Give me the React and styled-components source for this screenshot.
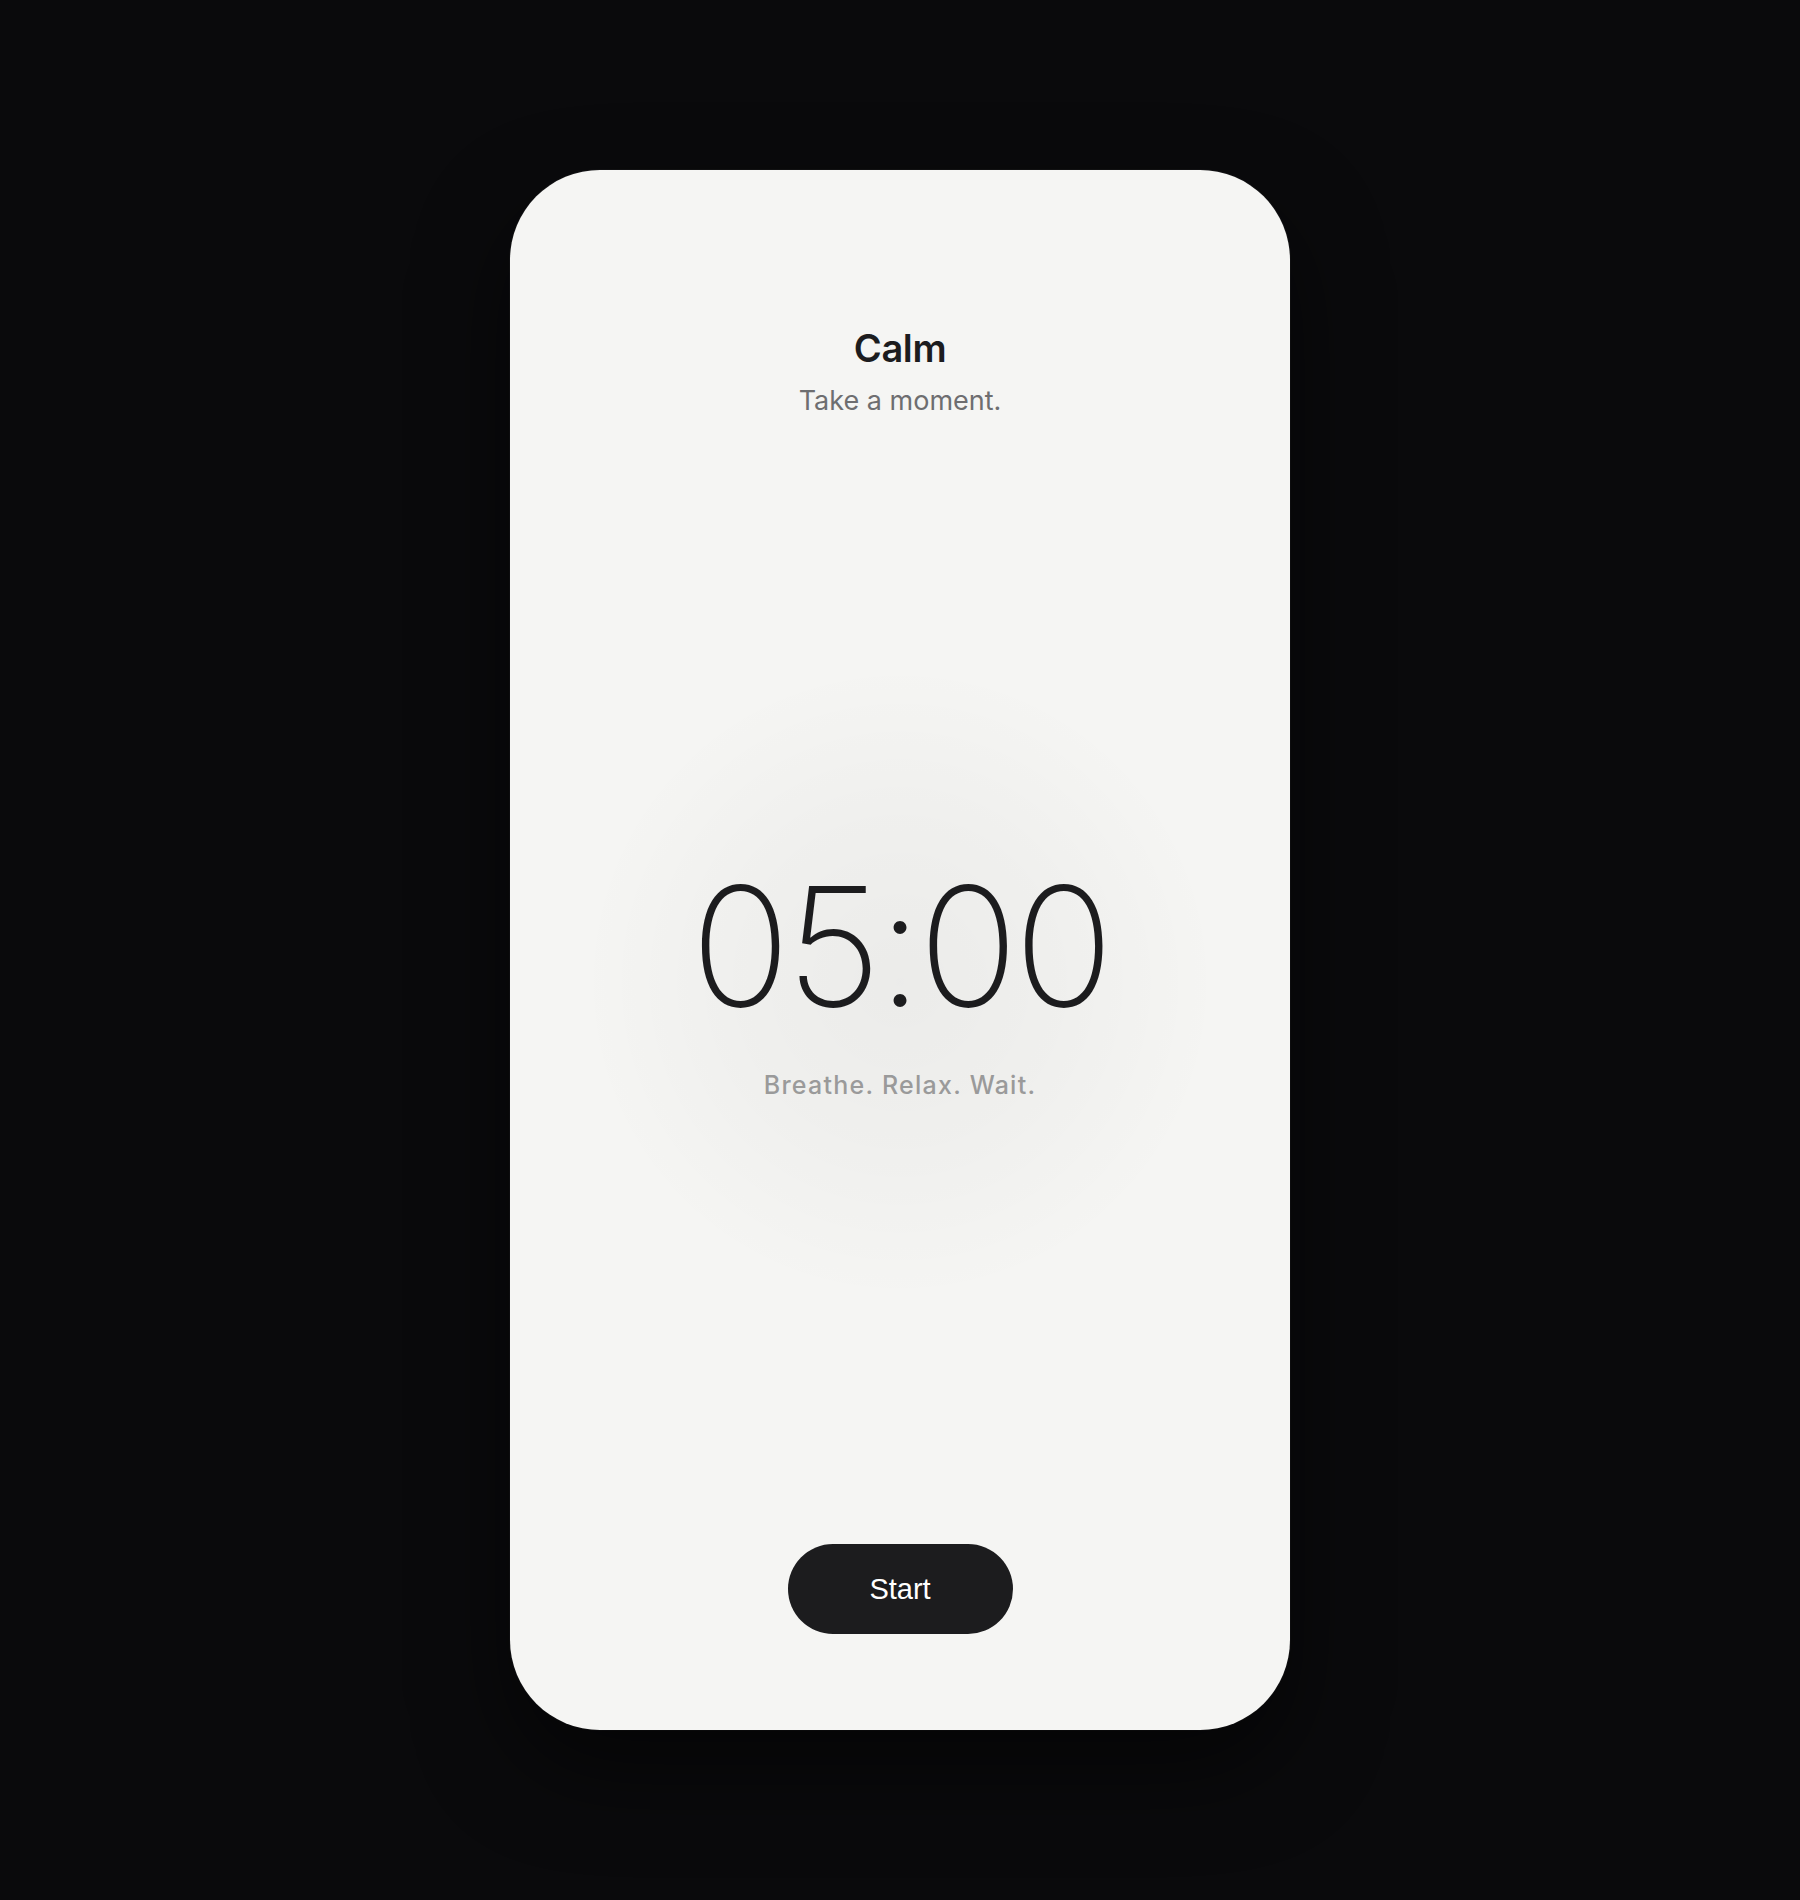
import React from "react";
import styled, { createGlobalStyle } from "styled-components";

const GlobalStyle = createGlobalStyle`
  html, body {
    margin: 0;
    padding: 0;
    background: #0a0a0c;
  }
  body {
    font-family: "Inter", "Liberation Sans", sans-serif;
    -webkit-font-smoothing: antialiased;
  }
  * { box-sizing: border-box; }
`;

const Page = styled.div`
  min-height: 1900px;
  display: flex;
  align-items: center;
  justify-content: center;
  background: #0a0a0c;
`;

const Phone = styled.main`
  width: 780px;
  height: 1560px;
  border-radius: 90px;
  background: #f5f5f3;
  box-shadow: 0 40px 90px rgba(0, 0, 0, 0.55), 0 0 0 1px rgba(255, 255, 255, 0.04);
  display: flex;
  flex-direction: column;
  align-items: center;
  padding: 154px 0 96px;
  overflow: hidden;
`;

const Header = styled.header`
  display: flex;
  flex-direction: column;
  align-items: center;
  gap: 9px;
`;

const Title = styled.h1`
  margin: 0;
  font-family: "Inter", "Liberation Sans", sans-serif;
  font-size: 38px;
  font-weight: 600;
  line-height: 48px;
  color: #1c1c1e;
  letter-spacing: -0.01em;
`;

const Subtitle = styled.p`
  margin: 0;
  font-size: 27px;
  font-weight: 400;
  line-height: 39px;
  color: #6e6e70;
`;

const Stage = styled.section`
  flex: 1;
  align-self: stretch;
  display: flex;
  flex-direction: column;
  align-items: center;
  justify-content: center;
  gap: 36px;
  background: radial-gradient(
    circle at 50% 50%,
    rgba(0, 0, 0, 0.04) 0px,
    rgba(0, 0, 0, 0.025) 160px,
    rgba(0, 0, 0, 0) 320px
  );
`;

const Timer = styled.div`
  font-family: "Inter", "Liberation Sans", sans-serif;
  font-size: 165px;
  font-weight: 250;
  line-height: 170px;
  color: #1c1c1e;
  letter-spacing: -0.026em;
`;

const Tagline = styled.p`
  margin: 0;
  font-size: 25px;
  font-weight: 500;
  line-height: 36px;
  letter-spacing: 0.05em;
  color: #9a9a9a;
`;

const Footer = styled.footer`
  display: flex;
  justify-content: center;
`;

const StartButton = styled.button`
  width: 225px;
  height: 90px;
  border: none;
  border-radius: 45px;
  background: #1c1c1e;
  color: #ffffff;
  font-family: "Liberation Sans", Arial, sans-serif;
  font-size: 29px;
  font-weight: 400;
  cursor: pointer;
`;

export default function App() {
  return (
    <>
      <GlobalStyle />
      <Page>
        <Phone>
          <Header>
            <Title>Calm</Title>
            <Subtitle>Take a moment.</Subtitle>
          </Header>
          <Stage>
            <Timer>05:00</Timer>
            <Tagline>Breathe. Relax. Wait.</Tagline>
          </Stage>
          <Footer>
            <StartButton>Start</StartButton>
          </Footer>
        </Phone>
      </Page>
    </>
  );
}
